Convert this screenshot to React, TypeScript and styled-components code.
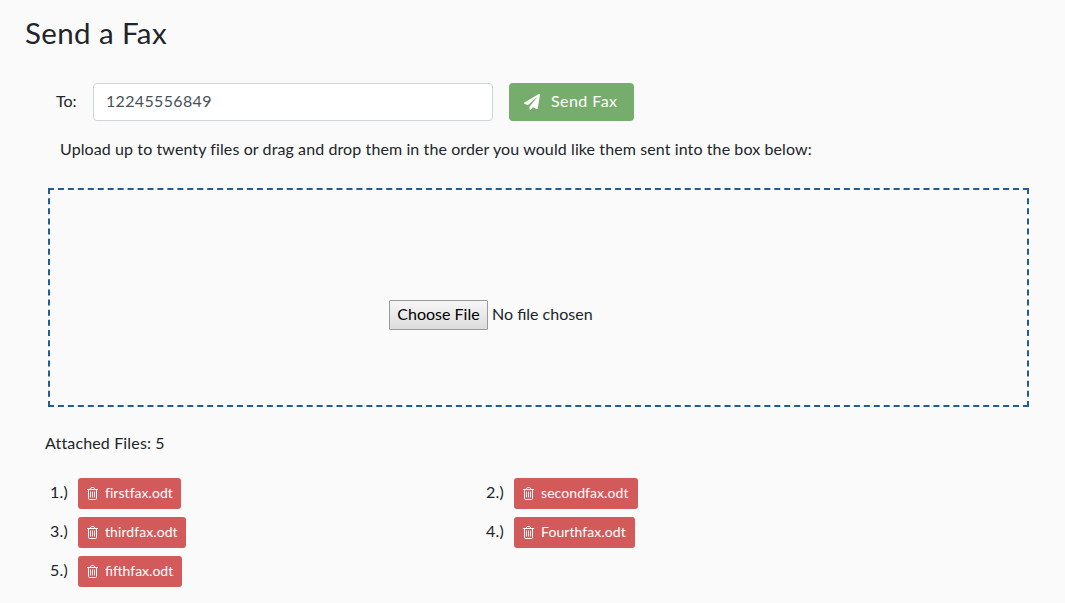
import React from "react";
import styled, { createGlobalStyle } from "styled-components";
import { FaPaperPlane } from "react-icons/fa";

const GlobalStyle = createGlobalStyle`
  *, *::before, *::after { box-sizing: border-box; }
  body {
    margin: 0;
    background: #fafafa;
    color: #212529;
    font-family: Lato, "Open Sans", sans-serif;
    font-size: 16px;
    line-height: 24px;
  }
`;

const Page = styled.main`
  min-height: 603px;
  padding: 16px 36px 0 25px;
`;

const Title = styled.h1`
  height: 35px;
  margin: 0;
  font-size: 29.5px;
  line-height: 33px;
  font-weight: 400;
  letter-spacing: 0.38px;
`;

const Text = styled.span<{ $spacing?: number }>`
  display: block;
  padding-bottom: 2px;
  line-height: 22px;
  white-space: nowrap;
  letter-spacing: ${(p) => p.$spacing ?? 0}px;
`;

const SendForm = styled.form`
  display: flex;
  align-items: center;
  height: 38px;
  margin: 32px 0 0 31px;
`;

const ToLabel = styled.label`
  width: 37px;
`;

const NumberInput = styled.input`
  width: 400px;
  height: 38px;
  padding: 4px 12px 8px;
  border: 1px solid #ced4da;
  border-radius: 4px;
  background: #fff;
  color: #495057;
  font: inherit;
  line-height: 24px;
  letter-spacing: 0.34px;
`;

const SendButton = styled.button`
  display: flex;
  align-items: center;
  gap: 11px;
  width: 125px;
  height: 38px;
  margin-left: 16px;
  padding: 0 15px;
  border: 0;
  border-radius: 4px;
  background: #76ad6c;
  color: #fff;
  font: inherit;
`;

const Hint = styled.p`
  margin: 17px 0 0 35px;
`;

const DropZone = styled.section`
  display: flex;
  align-items: center;
  gap: 4px;
  height: 219px;
  margin: 26px 0 0 23px;
  padding: 35px 0 0 339px;
  border: 2px dashed #1f5c99;
`;

const ChooseButton = styled.button`
  display: flex;
  align-items: center;
  justify-content: center;
  width: 99px;
  height: 30px;
  padding: 0;
  border: 1px solid #9a9a9a;
  border-radius: 1px;
  background: linear-gradient(#f6f6f6, #dddddd);
  color: #000;
  font: inherit;
`;

const AttachedCount = styled.p`
  margin: 25px 0 0 20px;
`;

const FileList = styled.div`
  display: grid;
  grid-template-columns: 436px 436px;
  row-gap: 8px;
  margin: 22px 0 0 25px;
`;

const FileItem = styled.div`
  display: flex;
  align-items: center;
  height: 31px;
`;

const FileIndex = styled.div`
  width: 28px;
  padding-bottom: 2px;
`;

const FileButton = styled.button<{ $width: number }>`
  display: flex;
  align-items: center;
  gap: 7px;
  width: ${(p) => p.$width}px;
  height: 31px;
  padding: 0 8px 0 9px;
  border: 0;
  border-radius: 3px;
  background: #d35a5a;
  color: #fff;
  font-family: inherit;
  font-size: 14px;
`;

function TrashIcon() {
  return (
    <svg width="11" height="13" viewBox="0 0 11 13" fill="none" stroke="currentColor" aria-hidden="true">
      <path d="M0 2.5h11M3.2 2.5l.6-1.5q.2-.5.7-.5h2q.5 0 .7.5l.6 1.5" />
      <path d="M1.5 3v8.5q0 1 1 1h6q1 0 1-1V3" />
      <path d="M3.5 4.5v6M5.5 4.5v6M7.5 4.5v6" strokeOpacity="0.85" />
    </svg>
  );
}

const files = [
  { name: "firstfax.odt", width: 103, spacing: 0.05 },
  { name: "secondfax.odt", width: 124, spacing: 0.08 },
  { name: "thirdfax.odt", width: 108, spacing: 0.08 },
  { name: "Fourthfax.odt", width: 121, spacing: 0.08 },
  { name: "fifthfax.odt", width: 104, spacing: 0 },
];

export default function App() {
  return (
    <Page>
      <GlobalStyle />
      <Title>Send a Fax</Title>
      <SendForm onSubmit={(e) => e.preventDefault()}>
        <ToLabel htmlFor="fax-number"><Text>To:</Text></ToLabel>
        <NumberInput id="fax-number" defaultValue="12245556849" />
        <SendButton type="submit">
          <FaPaperPlane size={16} />
          <Text $spacing={0.45}>Send Fax</Text>
        </SendButton>
      </SendForm>
      <Hint>
        <Text $spacing={0.1}>
          Upload up to twenty files or drag and drop them in the order you would like them sent into the box below:
        </Text>
      </Hint>
      <DropZone>
        <ChooseButton type="button"><Text>Choose File</Text></ChooseButton>
        <Text>No file chosen</Text>
      </DropZone>
      <AttachedCount><Text $spacing={0.15}>Attached Files: 5</Text></AttachedCount>
      <FileList>
        {files.map((file, i) => (
          <FileItem key={file.name}>
            <FileIndex><Text $spacing={0.2}>{i + 1}.)</Text></FileIndex>
            <FileButton type="button" $width={file.width}>
              <TrashIcon />
              <Text $spacing={file.spacing}>{file.name}</Text>
            </FileButton>
          </FileItem>
        ))}
      </FileList>
    </Page>
  );
}
